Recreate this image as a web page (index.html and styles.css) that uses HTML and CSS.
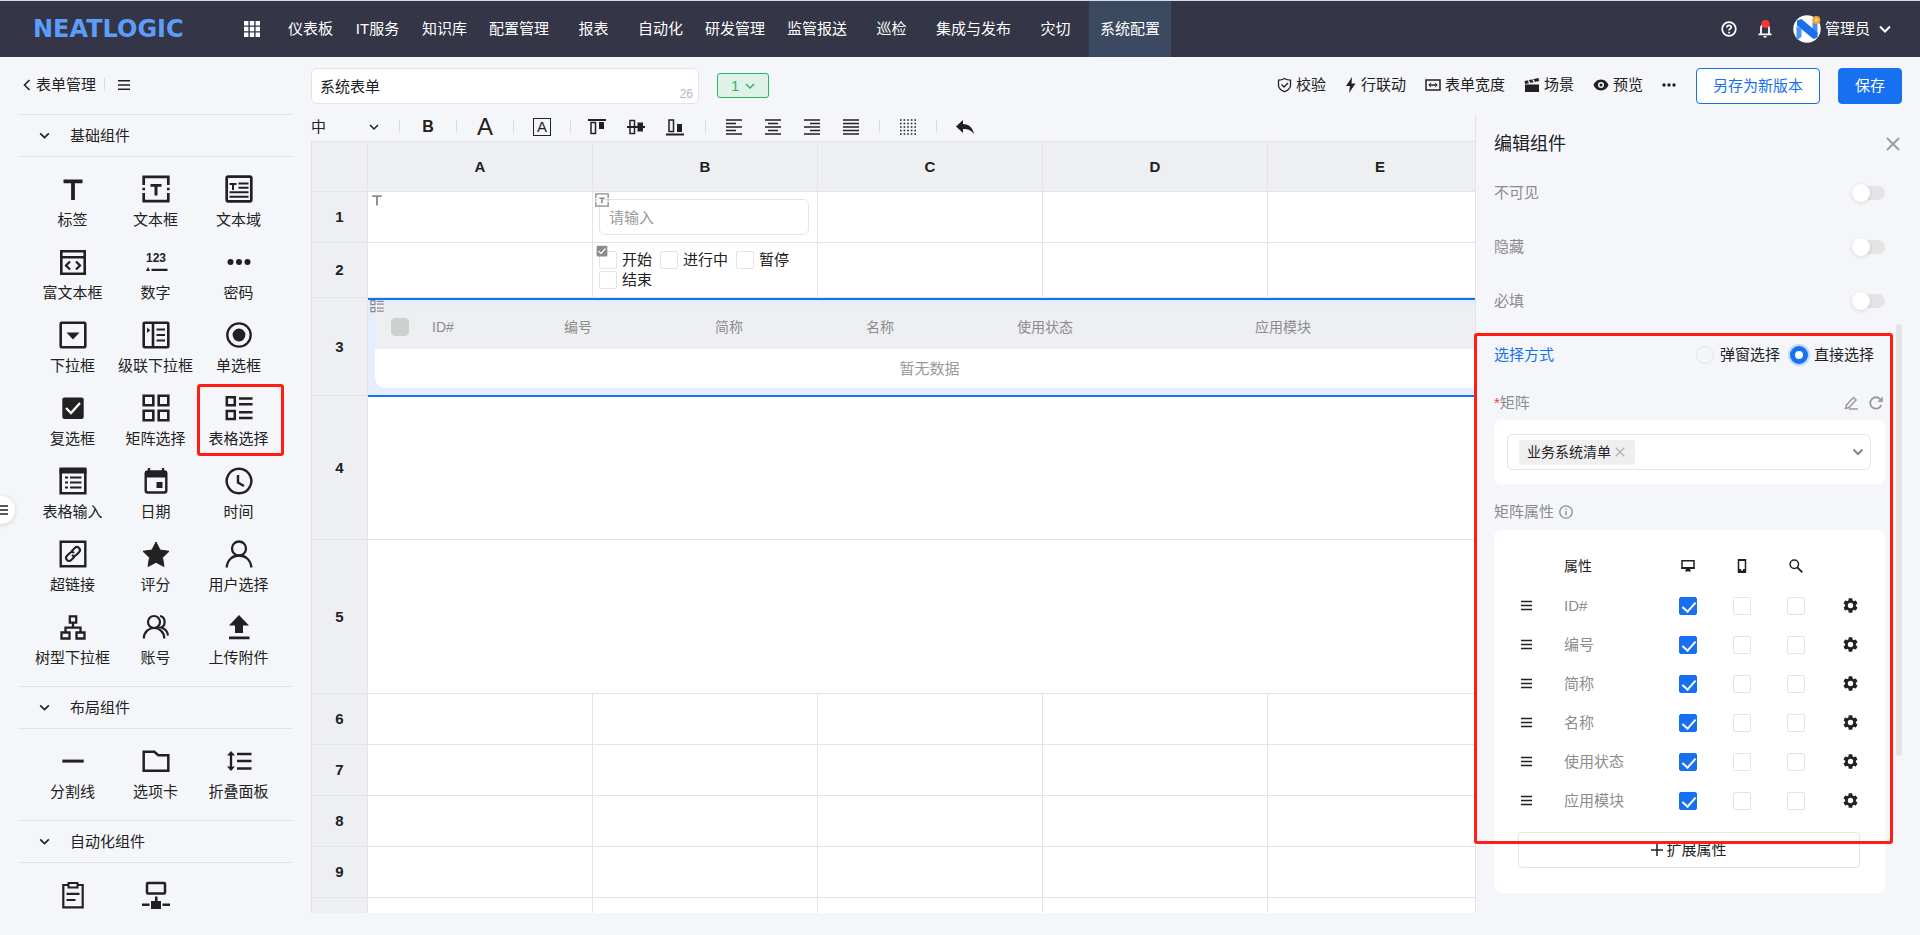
FILE: index.html
```html
<!DOCTYPE html>
<html lang="zh-CN">
<head>
<meta charset="utf-8">
<title>系统表单 - 表单管理</title>
<link rel="stylesheet" href="styles.css">
</head>
<body>
<svg class="sprite" aria-hidden="true">
  <symbol id="chev" viewBox="0 0 12 12"><path d="M2 4l4 4 4-4" fill="none" stroke="currentColor" stroke-width="1.5"/></symbol>
  <symbol id="menu" viewBox="0 0 14 14"><path d="M0 2h14M0 7h14M0 12h14" fill="none" stroke="currentColor" stroke-width="1.8"/></symbol>
  <symbol id="cross" viewBox="0 0 14 14"><path d="M1 1l12 12M13 1L1 13" fill="none" stroke="currentColor" stroke-width="1.8"/></symbol>
  <symbol id="gear" viewBox="2 2 20 20"><path fill="currentColor" d="M19.140 12.940c.04-.3.06-.61.06-.94 0-.32-.02-.64-.07-.94l2.030-1.580a.49.49 0 0 0 .12-.61l-1.920-3.320a.488.488 0 0 0-.59-.22l-2.390.96c-.5-.38-1.030-.7-1.620-.94l-.36-2.540a.484.484 0 0 0-.48-.41h-3.840c-.24 0-.43.17-.47.41l-.36 2.540c-.59.24-1.130.57-1.620.94l-2.390-.96c-.22-.08-.47 0-.59.22L2.740 8.870c-.12.21-.08.47.12.61l2.030 1.580c-.05.3-.09.63-.09.94s.02.64.07.94l-2.030 1.580a.49.49 0 0 0-.12.61l1.920 3.320c.12.22.37.29.59.22l2.390-.96c.5.38 1.030.7 1.620.94l.36 2.540c.05.24.24.41.48.41h3.840c.24 0 .44-.17.47-.41l.36-2.540c.59-.24 1.130-.56 1.620-.94l2.390.96c.22.08.47 0 .59-.22l1.920-3.320a.49.49 0 0 0-.12-.61zM12 15.600a3.600 3.600 0 1 1 0-7.200 3.600 3.600 0 0 1 0 7.200z"/></symbol>
  <symbol id="i-t" viewBox="0 0 28 28"><path d="M4.500 4.500h19v3.700h-7.600V25h-3.800V8.200H4.500z" fill="currentColor"/></symbol>
  <symbol id="i-text" viewBox="0 0 28 28"><g fill="none" stroke="currentColor" stroke-width="2.700"><path d="M1.700 10V1.800h24.600V10M1.700 18v8.200h24.600V18"/><path d="M1.700 12.700v2.600M26.300 12.700v2.600"/></g><path d="M8.500 9h11v2.800h-4v8.700h-3v-8.700h-4z" fill="currentColor"/></symbol>
  <symbol id="i-area" viewBox="0 0 28 28"><g fill="none" stroke="currentColor"><rect x="1.700" y="1.700" width="24.600" height="24.600" rx="1.500" stroke-width="2.700"/><path d="M13.500 8.500h10M13.500 12.800h10M4.500 17.300h19M4.500 21.700h19" stroke-width="2"/><path d="M4.500 9h7M8 9v6" stroke-width="2"/></g></symbol>
  <symbol id="i-rich" viewBox="0 0 28 28"><g fill="none" stroke="currentColor"><path d="M2.300 3.300h23.400v22.400H2.300zM2.300 9.300h23.400" stroke-width="2.600"/><path d="M11 13.500l-4 4 4 4M17 13.500l4 4-4 4" stroke-width="2.300"/></g></symbol>
  <symbol id="i-dots" viewBox="0 0 28 28"><g fill="currentColor"><circle cx="5.500" cy="14" r="3"/><circle cx="14" cy="14" r="3"/><circle cx="22.500" cy="14" r="3"/></g></symbol>
  <symbol id="i-drop" viewBox="0 0 28 28"><rect x="1.700" y="1.700" width="24.600" height="24.600" rx="1" fill="none" stroke="currentColor" stroke-width="2.600"/><path d="M7.500 11.500h13L14 18.500z" fill="currentColor"/></symbol>
  <symbol id="i-casc" viewBox="0 0 28 28"><g fill="none" stroke="currentColor" stroke-width="2.600"><rect x="1.700" y="1.700" width="24.600" height="24.600" rx="1"/><path d="M11 2v24"/><path d="M14.500 8.500H23M14.500 14H23M14.500 19.500H23" stroke-width="2.200"/></g><path d="M5 6.500l3.300 2.700L5 12z" fill="currentColor"/></symbol>
  <symbol id="i-radio" viewBox="0 0 28 28"><circle cx="14" cy="14" r="11.700" fill="none" stroke="currentColor" stroke-width="2.300"/><circle cx="14" cy="14" r="6.400" fill="currentColor"/></symbol>
  <symbol id="i-check" viewBox="0 0 28 28"><rect x="3.300" y="3.500" width="21.400" height="21.400" rx="2" fill="currentColor"/><path d="M7 14l5 5 9-10" fill="none" stroke="#fff" stroke-width="2.300"/></symbol>
  <symbol id="i-matrix" viewBox="0 0 28 28"><path d="M1.700 1.700h9.600v9.600H1.700zM16.700 1.700h9.600v9.600h-9.600zM1.700 16.700h9.600v9.600H1.700zM16.700 16.700h9.600v9.600h-9.600z" fill="none" stroke="currentColor" stroke-width="2.600"/></symbol>
  <symbol id="i-tsel" viewBox="0 0 28 28"><path d="M1.800 3.300h8v8h-8zM1.800 17h8v8h-8zM14 4.500h13.500M14 10.300h13.500M14 18.200h13.500M14 24h13.500" fill="none" stroke="currentColor" stroke-width="2.500"/></symbol>
  <symbol id="i-tin" viewBox="0 0 28 28"><g fill="none" stroke="currentColor"><path d="M1.700 3h24.600v23.300H1.700z" stroke-width="2.600"/><path d="M.5 3.500h27" stroke-width="6"/><path d="M11 10.500h11.500M11 15.500h11.500M11 20.500h11.500M6 10.500h3M6 15.500h3M6 20.500h3" stroke-width="2.200"/></g></symbol>
  <symbol id="i-date" viewBox="0 0 28 28"><path d="M7 1v5M21 1v5" stroke="currentColor" stroke-width="2.300"/><rect x="3.700" y="4.500" width="20.600" height="21" rx="2" fill="none" stroke="currentColor" stroke-width="2.400"/><path d="M3 4h22v6.500H3zM14.500 15h6v6h-6z" fill="currentColor"/></symbol>
  <symbol id="i-time" viewBox="0 0 28 28"><path d="M14 1.700a12.300 12.300 0 1 0 .01 0zM13 8v7.500l6 3.500" fill="none" stroke="currentColor" stroke-width="2.400"/></symbol>
  <symbol id="i-link" viewBox="0 0 28 28"><g fill="none" stroke="currentColor" stroke-width="2.400"><path d="M1.700 1.700h24.600v24.600H1.700z"/><g transform="rotate(-45 14 14)" stroke-width="2.100"><path d="M13 17h-4.500a3 3 0 0 1 0-6h4a3 3 0 0 1 3 3"/><path d="M15 11h4.500a3 3 0 0 1 0 6h-4a3 3 0 0 1-3-3"/></g></g></symbol>
  <symbol id="i-star" viewBox="0 0 28 28"><path d="M14 2l4 8 9 1.300-6.500 6.300L22 26.500l-8-4.200-8 4.200 1.500-8.900L1 11.300 10 10z" fill="currentColor" stroke="currentColor" stroke-linejoin="round"/></symbol>
  <symbol id="i-user" viewBox="0 0 28 28"><g fill="none" stroke="currentColor" stroke-width="2.300"><circle cx="14" cy="8.500" r="7"/><path d="M1.700 27.500c1-16 23.600-16 24.600 0"/></g></symbol>
  <symbol id="i-tree" viewBox="0 0 28 28"><path d="M10.800 3.300h6.400v6.400h-6.400zM2.500 19.500h8v6h-8zM17.500 19.500h8v6h-8zM14 10v5M6.500 19.500V14.700h15v4.800" fill="none" stroke="currentColor" stroke-width="2.300"/></symbol>
  <symbol id="i-acct" viewBox="0 0 28 28"><g fill="none" stroke="currentColor" stroke-width="2.200"><circle cx="12" cy="9" r="6"/><path d="M1.800 25.500c.5-14 20-14 20.500 0M18 3c6 1 6 10 1 11.500 4 1 6.500 4 7 8"/></g></symbol>
  <symbol id="i-up" viewBox="0 0 28 28"><path d="M14 2l10 10.500h-6V20h-8v-7.500H4zM4 23.500h20.500v2.800H4z" fill="currentColor"/></symbol>
  <symbol id="i-line" viewBox="0 0 28 28"><path d="M3.300 12.600h21.400v3H3.300z" fill="currentColor"/></symbol>
  <symbol id="i-folder" viewBox="0 0 28 28"><path d="M1.700 4.700h10.600l4 3.600h10v15.400H1.700z" fill="none" stroke="currentColor" stroke-width="2.500"/></symbol>
  <symbol id="i-fold" viewBox="0 0 28 28"><path d="M12 7h14.500M12 14h14.500M12 21.500h14.500M6 6v17" fill="none" stroke="currentColor" stroke-width="2.300"/><path d="M2 8.500l4-4.500 4 4.500zM2 19.500l4 4.500 4-4.500z" fill="currentColor"/></symbol>
  <symbol id="i-clip" viewBox="0 0 28 28"><path d="M4.300 4h19.400v22.300H4.300zM7.500 12.800h13M7.500 19h9" fill="none" stroke="currentColor" stroke-width="2.200"/><path d="M9.500 2h9v4.500h-9z" fill="#f4f6fa" stroke="currentColor" stroke-width="2"/></symbol>
  <symbol id="i-net" viewBox="0 0 28 28"><rect x="5" y="2" width="18" height="10.500" rx="1" fill="none" stroke="currentColor" stroke-width="2.500"/><path d="M13 15.500h2.500V20h-2.500zM9 20h10v8H9zM0 22.500h7.500v2.600H0zM20.500 22.500H28v2.600h-7.500z" fill="currentColor"/></symbol>
</svg>

<header class="header">
  <a class="logo" href="#">NEATLOGIC</a>
  <button class="icon-btn apps" aria-label="应用"><svg width="16" height="16" viewBox="0 0 16 16"><path fill="currentColor" d="M0 0h4.400v4.400H0zM5.800 0h4.400v4.400H5.800zM11.600 0H16v4.400h-4.400zM0 5.800h4.400v4.400H0zM5.800 5.800h4.400v4.400H5.800zM11.600 5.800H16v4.400h-4.400zM0 11.600h4.400V16H0zM5.800 11.600h4.400V16H5.800zM11.600 11.600H16V16h-4.400z"/></svg></button>
  <nav class="nav">
    <a href="#">仪表板</a><a href="#">IT服务</a><a href="#">知识库</a><a href="#">配置管理</a><a href="#">报表</a><a href="#">自动化</a><a href="#">研发管理</a><a href="#">监管报送</a><a href="#">巡检</a><a href="#">集成与发布</a><a href="#">灾切</a><a href="#" class="active">系统配置</a>
  </nav>
  <div class="user">
    <button class="icon-btn" aria-label="帮助"><svg width="16" height="16" viewBox="0 0 16 16" fill="none" stroke="currentColor" stroke-width="1.700"><circle cx="8" cy="8" r="6.800"/><path d="M5.800 6.500c0-3 4.600-2.800 4.400 0-.1 1.400-2.200 1.400-2.200 3M8 10.800v1.600"/></svg></button>
    <button class="icon-btn" aria-label="通知"><svg width="14" height="18" viewBox="0 0 14 18"><path d="M3 14V8.500c0-5 8-5 8 0V14M.5 14.300h13" fill="none" stroke="currentColor" stroke-width="1.800"/><path d="M5.500 16h3v1.500h-3z" fill="currentColor"/><circle cx="7.500" cy="4" r="4" fill="#f33"/></svg></button>
    <button class="account"><svg width="28" height="28" viewBox="0 0 28 28"><circle cx="14" cy="14" r="13.700" fill="#fff"/><path d="M3.500 11l5 3v8l-5 3zM19.500 7l5-1v14l-5-3z" fill="#4a90f5"/><path d="M4 5.500l4.500-1.500 16 13.500v5l-4 1.500L4 10.500z" fill="#1a6ff0"/><circle cx="23.300" cy="5" r="4" fill="#f0a63c"/><circle cx="23.300" cy="5" r="1.500" fill="#ffd98c"/></svg><span>管理员</span><svg class="caret" width="12" height="12" viewBox="0 0 12 12"><path d="M1 3.500L6 8.500l5-5" fill="none" stroke="currentColor" stroke-width="2"/></svg></button>
  </div>
</header>

<div class="page">
  <aside class="sidebar">
    <div class="side-top"><a href="#"><svg width="8" height="12" viewBox="0 0 8 12"><path d="M6.500 1l-5 5 5 5" fill="none" stroke="currentColor" stroke-width="1.600"/></svg>表单管理</a><span class="vsep"></span><button class="icon-btn" aria-label="菜单"><svg width="14" height="12"><use href="#menu"/></svg></button></div>
    <section>
      <h2><svg><use href="#chev"/></svg>基础组件</h2>
      <ul class="widgets">
        <li><svg><use href="#i-t"/></svg>标签</li>
        <li><svg><use href="#i-text"/></svg>文本框</li>
        <li><svg><use href="#i-area"/></svg>文本域</li>
        <li><svg><use href="#i-rich"/></svg>富文本框</li>
        <li><svg viewBox="0 0 28 28"><text x="14" y="14" text-anchor="middle" class="num-glyph">123</text><path d="M4 23l2-4 2 4zM9.500 20.700h16v2.200h-16z" fill="currentColor"/></svg>数字</li>
        <li><svg><use href="#i-dots"/></svg>密码</li>
        <li><svg><use href="#i-drop"/></svg>下拉框</li>
        <li><svg><use href="#i-casc"/></svg>级联下拉框</li>
        <li><svg><use href="#i-radio"/></svg>单选框</li>
        <li><svg><use href="#i-check"/></svg>复选框</li>
        <li><svg><use href="#i-matrix"/></svg>矩阵选择</li>
        <li class="marked"><svg><use href="#i-tsel"/></svg>表格选择</li>
        <li><svg><use href="#i-tin"/></svg>表格输入</li>
        <li><svg><use href="#i-date"/></svg>日期</li>
        <li><svg><use href="#i-time"/></svg>时间</li>
        <li><svg><use href="#i-link"/></svg>超链接</li>
        <li><svg><use href="#i-star"/></svg>评分</li>
        <li><svg><use href="#i-user"/></svg>用户选择</li>
        <li><svg><use href="#i-tree"/></svg>树型下拉框</li>
        <li><svg><use href="#i-acct"/></svg>账号</li>
        <li><svg><use href="#i-up"/></svg>上传附件</li>
      </ul>
    </section>
    <section>
      <h2><svg><use href="#chev"/></svg>布局组件</h2>
      <ul class="widgets">
        <li><svg><use href="#i-line"/></svg>分割线</li>
        <li><svg><use href="#i-folder"/></svg>选项卡</li>
        <li><svg><use href="#i-fold"/></svg>折叠面板</li>
      </ul>
    </section>
    <section>
      <h2><svg><use href="#chev"/></svg>自动化组件</h2>
      <ul class="widgets">
        <li><svg><use href="#i-clip"/></svg></li>
        <li><svg><use href="#i-net"/></svg></li>
      </ul>
    </section>
  </aside>

  <main class="work">
    <div class="topbar">
      <div class="name"><input type="text" value="系统表单" aria-label="表单名称"><span>26</span></div>
      <div class="version"><select aria-label="版本"><option>1</option></select><svg width="12" height="12"><use href="#chev"/></svg></div>
      <div class="actions">
        <button><svg width="15" height="16" viewBox="0 0 15 16" fill="none" stroke="currentColor" stroke-width="1.300"><path d="M7.500 1.500c2 1.300 4 1.700 6 1.700v5c0 3-3 5.300-6 6.500-3-1.200-6-3.500-6-6.500v-5c2 0 4-.4 6-1.700z"/><path d="M4.500 7.500l2.500 2.500 4-4"/></svg>校验</button>
        <button><svg width="12" height="16" viewBox="0 0 12 16"><path d="M7 0L1 9h4l-1 7 6.500-9.500h-4z" fill="currentColor"/></svg>行联动</button>
        <button><svg width="16" height="16" viewBox="0 0 16 16" fill="none" stroke="currentColor" stroke-width="1.500"><path d="M1 3h14v10H1zM4 8h8"/><path d="M6 5.800L3.800 8 6 10.200M10 5.800L12.200 8 10 10.200" stroke-width="1"/></svg>表单宽度</button>
        <button><svg width="16" height="16" viewBox="0 0 16 16" fill="currentColor"><path d="M1 7.500h14V15H1z"/><path d="M.5 4L14.500 1l.7 3L1.200 7z"/><path d="M4 3.300l2 2.700M8.500 2.300l2 2.700" stroke="#f4f6fa" stroke-width="1.300"/></svg>场景</button>
        <button><svg width="16" height="14" viewBox="0 0 16 14"><path d="M8 1.500c4 0 6.500 3 7.500 5.500-1 2.500-3.500 5.500-7.500 5.500S1.500 9.500.5 7C1.500 4.500 4 1.500 8 1.500zM8 4a3 3 0 1 0 0 6 3 3 0 0 0 0-6z" fill="currentColor" fill-rule="evenodd"/><circle cx="8" cy="7" r="1.500" fill="currentColor"/></svg>预览</button>
        <button aria-label="更多"><svg width="14" height="6" viewBox="0 0 14 6" fill="currentColor"><circle cx="2" cy="3" r="1.700"/><circle cx="7" cy="3" r="1.700"/><circle cx="12" cy="3" r="1.700"/></svg></button>
      </div>
      <button class="btn outline">另存为新版本</button>
      <button class="btn primary">保存</button>
    </div>

    <div class="body">
      <div class="canvas">
        <div class="format">
          <div class="fontsize"><select aria-label="字号"><option>中</option></select><svg width="12" height="12"><use href="#chev"/></svg></div>
          <span class="vsep"></span>
          <div class="g"><button class="bold" aria-label="加粗">B</button></div>
          <span class="vsep"></span>
          <div class="g"><button class="big" aria-label="文字颜色">A</button></div>
          <span class="vsep"></span>
          <div class="g"><button class="boxed" aria-label="背景颜色">A</button></div>
          <span class="vsep"></span>
          <div class="g valign">
            <button aria-label="顶端对齐"><svg viewBox="0 0 18 18"><path d="M0 1h18v2H0zM11 4h5v7h-5z" fill="currentColor"/><path d="M3 4.500h4.500v11H3z" fill="none" stroke="currentColor" stroke-width="1.500"/></svg></button>
            <button aria-label="垂直居中"><svg viewBox="0 0 18 18"><path d="M0 8h18v2H0zM10.500 4.500H16v9h-5.500z" fill="currentColor"/><path d="M3 2.500h4.500v13H3z" fill="none" stroke="currentColor" stroke-width="1.500"/></svg></button>
            <button aria-label="底端对齐"><svg viewBox="0 0 18 18"><path d="M0 15.500h18v2H0zM11 6h5v8h-5z" fill="currentColor"/><path d="M3 2h4.500v11.500H3z" fill="none" stroke="currentColor" stroke-width="1.500"/></svg></button>
          </div>
          <span class="vsep"></span>
          <div class="g">
            <button aria-label="左对齐"><svg viewBox="0 0 18 18"><path d="M1 2h16M1 5.500h10M1 9h16M1 12.500h10M1 16h16" stroke="currentColor" stroke-width="1.700"/></svg></button>
            <button aria-label="居中"><svg viewBox="0 0 18 18"><path d="M1 2h16M4 5.500h10M1 9h16M4 12.500h10M1 16h16" stroke="currentColor" stroke-width="1.700"/></svg></button>
            <button aria-label="右对齐"><svg viewBox="0 0 18 18"><path d="M1 2h16M7 5.500h10M1 9h16M7 12.500h10M1 16h16" stroke="currentColor" stroke-width="1.700"/></svg></button>
            <button aria-label="两端对齐"><svg viewBox="0 0 18 18"><path d="M1 2h16M1 5.500h16M1 9h16M1 12.500h16M1 16h16" stroke="currentColor" stroke-width="1.700"/></svg></button>
          </div>
          <span class="vsep"></span>
          <div class="g"><button aria-label="边框"><svg viewBox="0 0 18 18"><path d="M1 2h16M1 5.500h16M1 9h16M1 12.500h16M1 16h16" stroke="currentColor" stroke-width="1.500" stroke-dasharray="1.600 2"/></svg></button></div>
          <span class="vsep"></span>
          <div class="g"><button aria-label="撤销"><svg viewBox="0 0 18 18"><path d="M7 2v4c6 0 10 4 11 10-3-4-6-5-11-5v4L0 8.500z" fill="currentColor"/></svg></button></div>
        </div>

        <div class="sheet-wrap">
          <table class="sheet">
            <colgroup><col class="c-num"><col class="c-cell"><col class="c-cell"><col class="c-cell"><col class="c-cell"><col class="c-cell"></colgroup>
            <thead><tr><th></th><th>A</th><th>B</th><th>C</th><th>D</th><th>E</th></tr></thead>
            <tbody>
              <tr class="r-one"><th>1</th>
                <td><svg class="corner"><use href="#i-t"/></svg></td>
                <td class="hold"><svg class="corner"><use href="#i-text"/></svg><input class="field" type="text" placeholder="请输入" aria-label="文本框"></td>
                <td></td><td></td><td></td></tr>
              <tr class="r-two"><th>2</th><td></td>
                <td class="hold"><svg class="corner"><use href="#i-check"/></svg>
                  <div class="choices"><label><input type="checkbox">开始</label><label><input type="checkbox">进行中</label><label><input type="checkbox">暂停</label><label><input type="checkbox">结束</label></div></td>
                <td></td><td></td><td></td></tr>
              <tr class="r-three"><th>3</th>
                <td class="selected" colspan="5"><svg class="corner"><use href="#i-tsel"/></svg>
                  <table class="data">
                    <colgroup><col class="d1"><col class="d2"><col class="d3"><col class="d3"><col class="d3"><col class="d4"><col></colgroup>
                    <thead><tr><th><input type="checkbox" disabled aria-label="全选"></th><th>ID#</th><th>编号</th><th>简称</th><th>名称</th><th>使用状态</th><th>应用模块</th></tr></thead>
                    <tbody><tr><td colspan="7">暂无数据</td></tr></tbody>
                  </table></td></tr>
              <tr class="r-four"><th>4</th><td colspan="5"></td></tr>
              <tr class="r-five"><th>5</th><td colspan="5"></td></tr>
              <tr><th>6</th><td></td><td></td><td></td><td></td><td></td></tr>
              <tr><th>7</th><td></td><td></td><td></td><td></td><td></td></tr>
              <tr><th>8</th><td></td><td></td><td></td><td></td><td></td></tr>
              <tr><th>9</th><td></td><td></td><td></td><td></td><td></td></tr>
              <tr><th></th><td></td><td></td><td></td><td></td><td></td></tr>
            </tbody>
          </table>
        </div>
      </div>

      <aside class="panel">
        <div class="panel-head"><h1>编辑组件</h1><button class="icon-btn" aria-label="关闭"><svg width="14" height="14"><use href="#cross"/></svg></button></div>
        <label class="row">不可见<input class="switch" type="checkbox" role="switch"></label>
        <label class="row">隐藏<input class="switch" type="checkbox" role="switch"></label>
        <label class="row">必填<input class="switch" type="checkbox" role="switch"></label>
        <div class="row"><span class="link">选择方式</span><div class="radios"><label><input type="radio" name="mode">弹窗选择</label><label><input type="radio" name="mode" checked>直接选择</label></div></div>
        <div class="label-row"><span><i>*</i>矩阵</span><div class="tools">
          <button class="icon-btn" aria-label="编辑"><svg width="14" height="14" viewBox="0 0 14 14" fill="none" stroke="currentColor" stroke-width="1.500"><path d="M1.500 12.500L2.500 9l7-7.500 2.500 2.500-7 7.500zM5 13h9"/></svg></button>
          <button class="icon-btn" aria-label="刷新"><svg width="14" height="14" viewBox="0 0 14 14"><path d="M12.300 9A5.700 5.700 0 1 1 11.500 3.500" fill="none" stroke="currentColor" stroke-width="1.800"/><path d="M13.800.5V6H8.500z" fill="currentColor"/></svg></button></div></div>
        <div class="card pick"><div class="combo" role="combobox" aria-label="矩阵" aria-expanded="false"><span class="tag">业务系统清单<button class="icon-btn" aria-label="移除"><svg width="10" height="10"><use href="#cross"/></svg></button></span><svg class="arrow" width="12" height="12" viewBox="0 0 12 12"><path d="M1.500 3.500L6 8l4.500-4.500" fill="none" stroke="currentColor" stroke-width="2"/></svg></div></div>
        <div class="label-row attr"><span>矩阵属性</span><svg width="14" height="14" viewBox="0 0 14 14" fill="none" stroke="currentColor" stroke-width="1.300"><circle cx="7" cy="7" r="6.200"/><path d="M7 6v4.500M7 3.500v1.300"/></svg></div>
        <div class="card">
          <table class="attrs">
            <colgroup><col class="a1"><col><col class="a3"><col class="a3"><col class="a3"><col class="a3"></colgroup>
            <thead><tr><th></th><th class="n">属性</th>
              <th><svg width="14" height="14" viewBox="0 0 14 14"><path d="M1 1.800h12v7.500H1z" fill="none" stroke="currentColor" stroke-width="1.500"/><path d="M.5 8h13v2H9l1 2.500H4L5 10H.5z" fill="currentColor"/></svg></th>
              <th><svg width="14" height="14" viewBox="0 0 14 14"><path d="M3.500 1h7v12h-7z" fill="none" stroke="currentColor" stroke-width="1.500"/><path d="M3 10h3v1.500h2V10h3v4H3zM3 0h8v2H3z" fill="currentColor"/></svg></th>
              <th><svg width="14" height="14" viewBox="0 0 14 14" fill="none" stroke="currentColor"><circle cx="5.300" cy="5.300" r="4.200" stroke-width="1.500"/><path d="M8.300 8.300l5 5" stroke-width="1.900"/></svg></th><th></th></tr></thead>
            <tbody>
              <tr><td><svg class="drag"><use href="#menu"/></svg></td><td class="n">ID#</td><td><input type="checkbox" checked aria-label="ID# 桌面"></td><td><input type="checkbox" aria-label="ID# 手机"></td><td><input type="checkbox" aria-label="ID# 搜索"></td><td><button class="icon-btn" aria-label="设置"><svg class="cog"><use href="#gear"/></svg></button></td></tr>
              <tr><td><svg class="drag"><use href="#menu"/></svg></td><td class="n">编号</td><td><input type="checkbox" checked aria-label="编号 桌面"></td><td><input type="checkbox" aria-label="编号 手机"></td><td><input type="checkbox" aria-label="编号 搜索"></td><td><button class="icon-btn" aria-label="设置"><svg class="cog"><use href="#gear"/></svg></button></td></tr>
              <tr><td><svg class="drag"><use href="#menu"/></svg></td><td class="n">简称</td><td><input type="checkbox" checked aria-label="简称 桌面"></td><td><input type="checkbox" aria-label="简称 手机"></td><td><input type="checkbox" aria-label="简称 搜索"></td><td><button class="icon-btn" aria-label="设置"><svg class="cog"><use href="#gear"/></svg></button></td></tr>
              <tr><td><svg class="drag"><use href="#menu"/></svg></td><td class="n">名称</td><td><input type="checkbox" checked aria-label="名称 桌面"></td><td><input type="checkbox" aria-label="名称 手机"></td><td><input type="checkbox" aria-label="名称 搜索"></td><td><button class="icon-btn" aria-label="设置"><svg class="cog"><use href="#gear"/></svg></button></td></tr>
              <tr><td><svg class="drag"><use href="#menu"/></svg></td><td class="n">使用状态</td><td><input type="checkbox" checked aria-label="使用状态 桌面"></td><td><input type="checkbox" aria-label="使用状态 手机"></td><td><input type="checkbox" aria-label="使用状态 搜索"></td><td><button class="icon-btn" aria-label="设置"><svg class="cog"><use href="#gear"/></svg></button></td></tr>
              <tr><td><svg class="drag"><use href="#menu"/></svg></td><td class="n">应用模块</td><td><input type="checkbox" checked aria-label="应用模块 桌面"></td><td><input type="checkbox" aria-label="应用模块 手机"></td><td><input type="checkbox" aria-label="应用模块 搜索"></td><td><button class="icon-btn" aria-label="设置"><svg class="cog"><use href="#gear"/></svg></button></td></tr>
            </tbody>
          </table>
          <button class="extend"><svg width="12" height="12" viewBox="0 0 12 12"><path d="M6 0v12M0 6h12" stroke="currentColor" stroke-width="1.500"/></svg>扩展属性</button>
        </div>
        <span class="scrollbar"></span>
        <span class="highlight"></span>
      </aside>
    </div>
  </main>
</div>
<button class="handle" aria-label="展开菜单"><svg width="9" height="10" viewBox="0 0 9 10"><path d="M0 1h9M0 5h9M0 9h9" stroke="currentColor" stroke-width="1.500"/></svg></button>
</body>
</html>
```
FILE: styles.css
```css
:root {
  --ink: #212121;
  --grey: #8c8c8c;
  --line: #e4e4e4;
  --blue: #1670f0;
  --bg: #f4f6fa;
  --red: #ff1e14;
}
* { box-sizing: border-box; }
body {
  margin: 0;
  height: 100vh;
  display: flex;
  flex-direction: column;
  overflow: hidden;
  background: var(--bg);
  color: var(--ink);
  font: 15px/22px "Liberation Sans", "Noto Sans CJK SC", sans-serif;
}
button, input, select { font: inherit; color: inherit; margin: 0; }
button { background: none; border: 0; padding: 0; }
a { color: inherit; text-decoration: none; }
svg { display: block; flex: none; }
h1, h2 { margin: 0; font-weight: 400; }
.sprite { position: absolute; width: 0; height: 0; }
.num-glyph { font: bold 12px "Liberation Sans", sans-serif; fill: currentColor; }
.icon-btn { display: flex; align-items: center; justify-content: center; }
.vsep { width: 1px; height: 13px; background: #dcdcdc; flex: none; }

input[type="checkbox"]:not(.switch) {
  appearance: none;
  width: 18px;
  height: 18px;
  display: block;
  position: relative;
  flex: none;
  border: 1px solid var(--line);
  border-radius: 2px;
  background: #fff;
}
input[type="checkbox"]:not(.switch):checked { background: var(--blue); border-color: var(--blue); }
input[type="checkbox"]:not(.switch):checked::before {
  content: "";
  position: absolute;
  left: 5px;
  top: 1px;
  width: 6px;
  height: 11px;
  border: solid #fff;
  border-width: 0 2px 2px 0;
  transform: rotate(42deg);
}
input[type="checkbox"]:not(.switch):disabled { background: #cdd0ce; border-color: #cdd0ce; border-radius: 4px; }

.header {
  flex: none;
  height: 57px;
  display: flex;
  align-items: stretch;
  background: #343546;
  border-top: 1px solid #d5dde0;
  color: #fff;
}
.logo {
  width: 209px;
  margin-left: 33px;
  font: bold 24px/56px "DejaVu Sans", sans-serif;
  color: #5b9df9;
}
.apps { width: 20px; }
.nav { display: flex; margin-left: 15px; }
.nav a { min-width: 67px; padding: 0 11px; text-align: center; line-height: 56px; white-space: nowrap; }
.nav .active { background: #3b4a60; }
.user { display: flex; align-items: center; gap: 21px; margin-left: auto; padding-right: 29px; }
.account { display: flex; align-items: center; gap: 4px; }
.account .caret { margin-left: 5px; }

.page { flex: 1; min-height: 0; display: flex; padding: 0 18px 22px; }
.sidebar { flex: none; width: 275px; overflow: hidden; }
.side-top { height: 57px; display: flex; align-items: center; padding: 0 0 2px 5px; }
.side-top a { display: flex; align-items: center; gap: 5px; }
.side-top .vsep { margin: 0 12px 0 8px; }
.sidebar h2 {
  height: 43px;
  display: flex;
  align-items: center;
  gap: 19px;
  padding-left: 20px;
  border: solid var(--line);
  border-width: 1px 0;
  font-size: 15px;
}
.sidebar h2 svg { width: 13px; height: 13px; }
.widgets {
  list-style: none;
  margin: 0;
  padding: 18px 13px 17px;
  display: grid;
  grid-template-columns: repeat(3, 1fr);
  row-gap: 17px;
}
.widgets li { display: flex; flex-direction: column; align-items: center; gap: 6px; white-space: nowrap; position: relative; }
.widgets svg { width: 28px; height: 28px; }
.marked::after {
  content: "";
  position: absolute;
  inset: -10px -4px -6px 0;
  border: 3px solid var(--red);
  border-radius: 3px;
}

.work { flex: 1; min-width: 0; display: flex; flex-direction: column; padding-left: 18px; }
.topbar { flex: none; height: 57px; display: flex; align-items: center; }
.name { width: 388px; position: relative; }
.name input {
  width: 100%;
  height: 36px;
  padding: 0 8px;
  border: 1px solid var(--line);
  border-radius: 6px;
  background: #fff;
  display: block;
}
.name span { position: absolute; right: 6px; bottom: 0; font-size: 12px; line-height: 20px; color: #b4b6bd; }
.version { position: relative; margin-left: 18px; }
.version select {
  appearance: none;
  width: 52px;
  height: 25px;
  padding: 0 0 0 13px;
  border: 1px solid #25b864;
  border-radius: 3px;
  background: #e0f1ea;
  color: #25b864;
  display: block;
}
.version svg { position: absolute; right: 13px; top: 7px; color: #25b864; }
.actions { display: flex; align-items: center; gap: 19px; margin-left: auto; padding-bottom: 2px; }
.actions button { display: flex; align-items: center; gap: 4px; }
.btn { height: 36px; border: 1px solid var(--blue); border-radius: 4px; padding: 0 16px; margin-left: 20px; }
.outline { background: #fff; color: var(--blue); }
.primary { background: var(--blue); color: #fff; margin-left: 18px; }

.body { flex: 1; min-height: 0; display: flex; }
.canvas { flex: 1; min-width: 0; display: flex; flex-direction: column; }
.format { flex: none; height: 27px; display: flex; align-items: center; padding-bottom: 2px; }
.fontsize { width: 70px; position: relative; }
.fontsize select { appearance: none; width: 100%; border: 0; background: none; padding: 0; display: block; }
.fontsize svg { position: absolute; right: 1px; top: 5px; }
.fontsize + .vsep { margin-left: 18px; }
.format .g { display: flex; align-items: center; gap: 21px; padding: 0 19px; }
.format .valign { padding: 0 21px 0 17px; }
.format .g button { min-width: 18px; display: flex; justify-content: center; }
.format .g svg { width: 18px; height: 18px; }
.format .bold { font-weight: 700; font-size: 16px; }
.format .big { font-size: 24px; }
.format .boxed { border: 1px solid var(--ink); font-size: 15px; line-height: 16px; height: 18px; }

.sheet-wrap { flex: 1; min-height: 0; overflow: hidden; }
.sheet { width: 1182px; table-layout: fixed; border-collapse: separate; border-spacing: 0; border-top: 1px solid var(--line); border-left: 1px solid var(--line); }
.c-num { width: 56px; }
.c-cell { width: 225px; }
.sheet > * > tr > th { height: 50px; padding: 0; background: #eeeff3; border: solid var(--line); border-width: 0 1px 1px 0; font-weight: 700; }
.sheet > tbody > tr > th { height: 51px; }
.sheet > tbody > tr > td { position: relative; padding: 0 6px; background: #fff; border: solid var(--line); border-width: 0 1px 1px 0; }
.sheet > tbody > .r-two > th { height: 55px; }
.sheet > tbody > .r-three > th { height: 98px; }
.sheet > tbody > .r-four > th { height: 144px; }
.sheet > tbody > .r-five > th { height: 154px; }
.corner { position: absolute; left: 2px; top: 1px; width: 14px; height: 14px; color: #8c8c8c; z-index: 1; }
.field { width: 100%; height: 36px; border: 1px solid var(--line); border-radius: 6px; padding: 0 9px; display: block; background: #fff; }
.sheet > tbody > tr > .hold:has(.field) { padding-right: 8px; }
.field::placeholder { color: #9a9a9a; opacity: 1; }
.choices { display: flex; flex-wrap: wrap; column-gap: 8px; }
.choices label { display: flex; align-items: center; gap: 5px; height: 20px; }
.sheet > tbody > .r-three > .selected { background: #e4eefe; padding: 0 8px 0 7px; }
.selected::after { content: ""; position: absolute; inset: 0 0 -2px; border: solid var(--blue); border-width: 2px 0; pointer-events: none; z-index: 1; }
.data { width: 100%; table-layout: fixed; border-collapse: separate; border-spacing: 0; background: #fff; border-radius: 0 0 10px 10px; overflow: hidden; color: var(--grey); }
.d1 { width: 41px; }
.d2 { width: 132px; }
.d3 { width: 151px; }
.d4 { width: 238px; }
.data th { height: 44px; padding: 0 0 0 16px; background: #eeeff3; text-align: left; font-weight: 400; font-size: 14px; }
.data td { height: 39px; padding: 0; text-align: center; color: #9a9a9a; }

.panel { flex: none; width: 427px; position: relative; border-left: 1px solid var(--line); padding: 0 17px 0 18px; color: var(--grey); }
.panel-head { height: 60px; display: flex; align-items: center; justify-content: space-between; margin-right: -15px; }
.panel-head h1 { font-size: 18px; color: var(--ink); }
.panel-head button { color: #9a9a9a; }
.row { height: 54px; display: flex; align-items: center; justify-content: space-between; }
.panel-head + .row { margin-top: -8px; }
.switch { appearance: none; position: relative; width: 33px; height: 14px; border-radius: 7px; background: var(--line); }
.switch::before { content: ""; position: absolute; left: 0; top: -2px; width: 18px; height: 18px; border-radius: 50%; background: #fff; box-shadow: 0 1px 4px rgba(0, 0, 0, .12); }
.link { color: var(--blue); }
.radios { display: flex; gap: 10px; padding-right: 11px; color: var(--ink); }
.radios label { display: flex; align-items: center; gap: 6px; }
.radios input { appearance: none; width: 18px; height: 18px; border: 1px solid var(--line); border-radius: 50%; }
.radios input:checked { border: 5px solid var(--blue); background: #fff; box-shadow: 0 0 0 2px #bcd9fb; }
.label-row { height: 38px; display: flex; align-items: center; justify-content: space-between; padding-top: 4px; }
.label-row i { color: #f33; font-style: normal; }
.tools { display: flex; gap: 11px; padding-right: 2px; color: #9a9a9a; }
.attr { height: 46px; justify-content: flex-start; gap: 5px; padding-top: 10px; }
.card { background: #fff; border-radius: 8px; color: var(--ink); }
.pick { padding: 14px 14px 14px 13px; }
.combo { height: 36px; display: flex; align-items: center; justify-content: space-between; border: 1px solid var(--line); border-radius: 6px; padding: 0 6px 0 11px; }
.tag { display: flex; align-items: center; gap: 4px; height: 25px; padding: 0 10px 0 8px; border-radius: 3px; background: #efefef; font-size: 14px; }
.tag button { color: #b0b0b0; }
.arrow { color: #7c8598; }
.attrs { width: 100%; table-layout: fixed; border-collapse: collapse; }
.card:has(.attrs) { padding: 15px 8px 25px; }
.a1 { width: 48px; }
.a3 { width: 54px; }
.attrs th, .attrs td { height: 39px; padding: 0; }
.attrs th { height: 41px; font-size: 14px; font-weight: 400; }
.attrs .n { text-align: left; padding-left: 14px; }
.attrs td.n { color: var(--grey); }
.attrs svg, .attrs input, .attrs button { margin: 0 auto; }
.drag { width: 13px; height: 11px; }
.cog { width: 15px; height: 15px; }
.extend { width: calc(100% - 33px); height: 36px; margin: 12px 17px 0 16px; border: 1px solid var(--line); border-radius: 4px; display: flex; align-items: center; justify-content: center; gap: 3px; }
.scrollbar { position: absolute; right: 0; top: 210px; width: 6px; height: 432px; border-radius: 3px; background: var(--line); }
.highlight { position: absolute; left: -2px; right: 9px; top: 219px; height: 511px; border: 3px solid var(--red); border-radius: 3px; pointer-events: none; }

.handle { position: fixed; left: -13px; top: 496px; width: 28px; height: 28px; padding-left: 12px; border-radius: 50%; background: #fff; box-shadow: 0 1px 5px rgba(0, 0, 0, .15); }
```
